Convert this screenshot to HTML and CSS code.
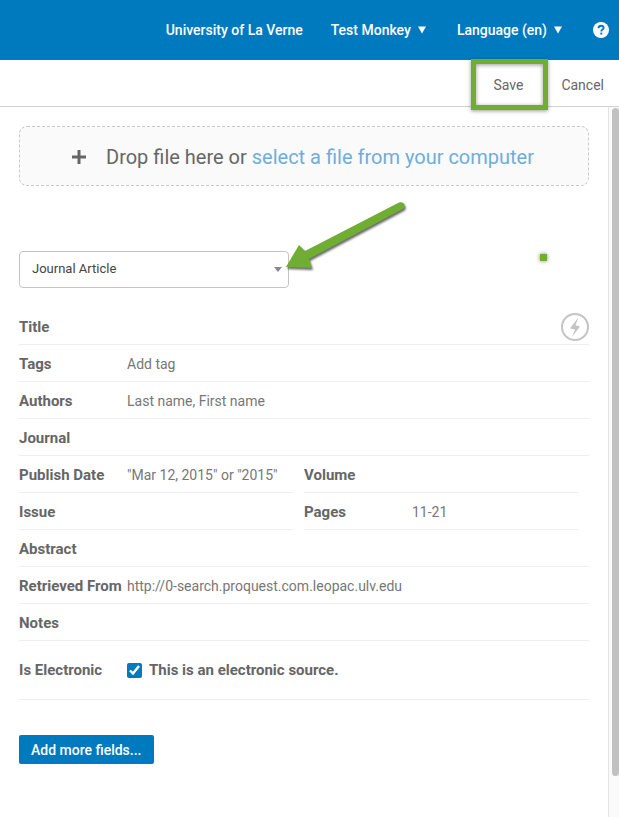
FILE: index.html
```html
<!DOCTYPE html>
<html lang="en">
<head>
  <meta charset="UTF-8">
  <meta name="viewport" content="width=device-width, initial-scale=1.0">
  <title>Add Reference</title>
  <link rel="stylesheet" href="styles.css">
</head>
<body>
  <header class="top-nav">
    <a href="#">University of La Verne</a>
    <a href="#" class="has-caret">Test Monkey
      <svg class="nav-caret" viewBox="0 0 8 8"><path d="M0 0.5h8L4 7.5z"/></svg>
    </a>
    <a href="#" class="has-caret">Language (en)
      <svg class="nav-caret" viewBox="0 0 8 8"><path d="M0 0.5h8L4 7.5z"/></svg>
    </a>
    <a href="#" class="help" aria-label="Help">
      <svg viewBox="0 0 16 16">
        <circle cx="8" cy="8" r="8" fill="#fff"/>
        <path d="M5.5 6.2C5.6 4.6 6.7 3.8 8.1 3.8c1.5 0 2.5.9 2.5 2.1 0 1.7-2.3 1.7-2.3 3.5" fill="none" stroke="#007abf" stroke-width="1.9"/>
        <path d="M7.3 10.6h2v1.9h-2z" fill="#007abf"/>
      </svg>
    </a>
  </header>

  <div class="toolbar">
    <button type="button" class="save">Save</button>
    <button type="button">Cancel</button>
  </div>

  <div class="content">
    <main class="panel">
      <div class="dropzone">
        <svg class="plus" viewBox="0 0 14 14"><path d="M5.5 0h3v5.5H14v3H8.5V14h-3V8.5H0v-3h5.5z"/></svg>
        <span>Drop file here or <a href="#">select a file from your computer</a></span>
      </div>

      <form class="reference">
        <div class="type-row">
          <div class="type-select">
            <select aria-label="Reference type">
              <option>Journal Article</option>
            </select>
            <svg class="select-caret" viewBox="0 0 8 5"><path d="M0 0h8L4 5z"/></svg>
            <!-- arrow pointing at the type drop-down -->
            <svg class="arrow" viewBox="0 0 130 80">
              <path d="M4 66L17 44L23 50L117 1.500Q121 0.500 122.500 3.500Q123.500 6.500 121 8L27 58L30 67Z"/>
            </svg>
          </div>
          <span class="dot"></span>
        </div>

        <div class="field">
          <label for="title">Title</label>
          <input type="text" id="title">
          <button type="button" class="autofill" aria-label="Autofill">
            <svg viewBox="0 0 28 28">
              <circle cx="14" cy="14" r="13" fill="none" stroke="#c4c4c4" stroke-width="2"/>
              <path d="M17.500 4L9 15.500l5 1L11 24l8-10.500-4.500-1.300z" fill="#c4c4c4"/>
            </svg>
          </button>
        </div>
        <div class="field">
          <label for="tags">Tags</label>
          <input type="text" id="tags" placeholder="Add tag">
        </div>
        <div class="field">
          <label for="authors">Authors</label>
          <input type="text" id="authors" placeholder="Last name, First name">
        </div>
        <div class="field">
          <label for="journal">Journal</label>
          <input type="text" id="journal">
        </div>
        <div class="field-pair">
          <div class="field">
            <label for="date">Publish Date</label>
            <input type="text" id="date" placeholder='"Mar 12, 2015" or "2015"'>
          </div>
          <div class="field">
            <label for="volume">Volume</label>
            <input type="text" id="volume">
          </div>
          <div class="field">
            <label for="issue">Issue</label>
            <input type="text" id="issue">
          </div>
          <div class="field">
            <label for="pages">Pages</label>
            <input type="text" id="pages" value="11-21">
          </div>
        </div>
        <div class="field">
          <label for="abstract">Abstract</label>
          <input type="text" id="abstract">
        </div>
        <div class="field">
          <label for="url">Retrieved From</label>
          <input type="text" id="url" value="http://0-search.proquest.com.leopac.ulv.edu">
        </div>
        <div class="field">
          <label for="notes">Notes</label>
          <input type="text" id="notes">
        </div>
        <div class="field electronic">
          <span class="field-name">Is Electronic</span>
          <input type="checkbox" id="electronic" checked>
          <label for="electronic">This is an electronic source.</label>
        </div>

        <button type="button" class="add-fields">Add more fields...</button>
      </form>
    </main>
    <div class="scrollbar"><div class="thumb"></div></div>
  </div>
</body>
</html>
```

FILE: styles.css
```css
* {
  box-sizing: border-box;
}

body {
  margin: 0;
  min-height: 100vh;
  display: flex;
  flex-direction: column;
  font-family: Roboto, Arial, sans-serif;
  font-size: 14px;
  color: #666;
  background: #fff;
}

a {
  text-decoration: none;
}

button,
input,
select {
  font: inherit;
  color: inherit;
  border: none;
  background: none;
  padding: 0;
}

button {
  cursor: pointer;
}

/* Top navigation */
.top-nav {
  display: flex;
  align-items: center;
  justify-content: flex-end;
  gap: 28px;
  height: 60px;
  padding-right: 10px;
  background: #007abf;
}

.top-nav a {
  color: #fff;
  font-weight: 500;
}

.top-nav .has-caret {
  display: flex;
  align-items: center;
  gap: 7px;
  padding-right: 3px;
}

.nav-caret {
  width: 8px;
  height: 8px;
  fill: #fff;
}

.help svg {
  display: block;
  width: 16px;
  height: 16px;
}

/* Save / Cancel */
.toolbar {
  display: flex;
  justify-content: flex-end;
  align-items: center;
  gap: 13px;
  height: 47px;
  padding: 3px 15px 0;
  border-bottom: 1px solid #d2d2d2;
}

.toolbar button {
  color: #666;
}

.toolbar .save {
  position: relative;
  width: 77px;
  height: 51px;
  padding-right: 3px;
  border: 5px solid #70ad33;
  box-shadow: 0 1px 4px rgba(0, 0, 0, 0.4), inset 0 1px 4px rgba(0, 0, 0, 0.4);
}

.content {
  flex: 1;
  display: flex;
}

.panel {
  flex: 1;
  min-width: 0;
  padding: 19px;
}

/* Upload */
.dropzone {
  display: flex;
  align-items: center;
  justify-content: center;
  gap: 20px;
  height: 60px;
  padding: 1px 2px 0 0;
  border: 1px dashed #c8c8c8;
  border-radius: 8px;
  background: #fafafa;
  font-size: 20px;
}

.dropzone a {
  color: #6eaedb;
}

.plus {
  width: 14px;
  height: 14px;
  fill: #666;
}

/* Reference type */
.type-row {
  display: flex;
  justify-content: space-between;
  margin: 65px 0 20px;
}

.type-select {
  position: relative;
  width: 270px;
}

.type-select select {
  display: block;
  width: 100%;
  height: 37px;
  padding: 0 12px 2px;
  border: 1px solid #c4c4c4;
  border-radius: 4px;
  appearance: none;
  font-size: 13px;
  color: #444;
}

.select-caret {
  position: absolute;
  top: 16px;
  right: 7px;
  width: 8px;
  height: 5px;
  fill: #888;
}

.arrow {
  position: absolute;
  top: -50px;
  left: 263px;
  width: 130px;
  height: 80px;
  fill: #70ad33;
  filter: drop-shadow(1px 2px 1px rgba(0, 0, 0, 0.6));
}

.dot {
  width: 7px;
  height: 7px;
  margin: 3px 42px 0 0;
  background: #70ad33;
  box-shadow: 0 0 4px rgba(0, 0, 0, 0.5);
}

/* Fields */
.field {
  display: flex;
  align-items: center;
  height: 37px;
  padding-top: 2px;
  border-bottom: 1px solid #eee;
}

.field label,
.field-name {
  font-size: 15px;
  font-weight: 700;
}

.field label:first-child,
.field-name {
  flex: 0 0 108px;
}

.field input[type="text"] {
  flex: 1;
  min-width: 0;
  height: 100%;
  outline: none;
  color: #777;
}

.field input::placeholder {
  color: #777;
  opacity: 1;
}

.field-pair {
  display: grid;
  grid-template-columns: repeat(2, minmax(0, 1fr));
  column-gap: 11px;
  padding-right: 11px;
}

.autofill svg {
  display: block;
  width: 28px;
  height: 28px;
}

.field.electronic {
  height: 59px;
  padding-top: 0;
}

.electronic input {
  width: 15px;
  height: 15px;
  margin: 0 7px 0 0;
  accent-color: #007abf;
}

.add-fields {
  height: 29px;
  margin-top: 35px;
  padding: 0 12px;
  border-radius: 2px;
  background: #007abf;
  color: #fff;
  font-weight: 500;
}

/* Scrollbar */
.scrollbar {
  display: flex;
  flex-direction: column;
  width: 11px;
  padding: 1px 0 41px 3px;
  border-left: 1px solid #e4e4e4;
  background: #fafafa;
}

.thumb {
  flex: 1;
  border-radius: 4px;
  background: #c1c1c1;
}
```
